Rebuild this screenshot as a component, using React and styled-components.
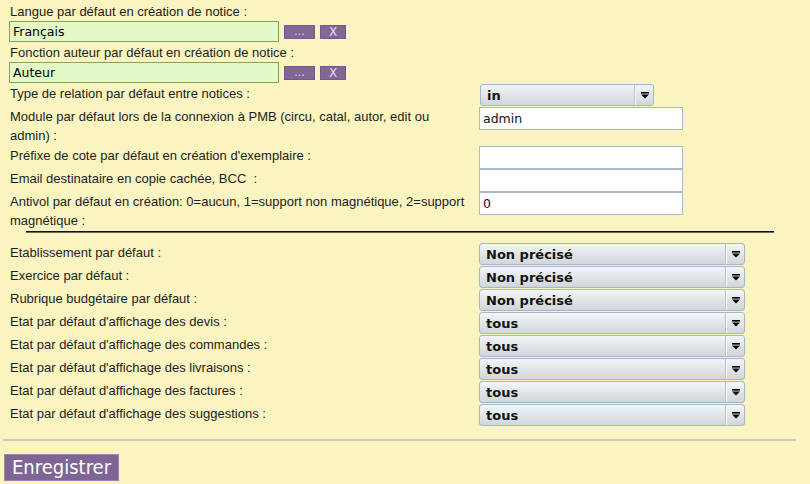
import React from "react";
import styled, { createGlobalStyle } from "styled-components";

const GlobalStyle = createGlobalStyle`
  html, body {
    margin: 0;
    padding: 0;
    background: #f9f4c0;
  }
  body {
    font-family: "Liberation Sans", Arial, sans-serif;
    font-size: 13px;
    color: #1e1e1e;
  }
`;

const Page = styled.div`
  display: flex;
  flex-direction: column;
  padding-top: 4px;
  min-height: 480px;
`;

const FieldBlock = styled.div`
  display: flex;
  flex-direction: column;
  padding-left: 9px;
  margin-bottom: ${(p) => p.$mb || 0}px;
`;

const FieldLabel = styled.div`
  line-height: 16px;
  padding-left: 1px;
`;

const ControlRow = styled.div`
  display: flex;
  align-items: center;
  gap: 5px;
  margin-top: 1px;
`;

const GreenInput = styled.input`
  box-sizing: border-box;
  width: 270px;
  height: 21px;
  margin: 0;
  padding: 0 3px;
  border: 1px solid #84a35a;
  background: #e5f9c8;
  font-family: "DejaVu Sans", sans-serif;
  font-size: 12.5px;
  color: #000;
  outline: none;
`;

const SmallButton = styled.button`
  box-sizing: border-box;
  width: ${(p) => p.$w}px;
  height: 14px;
  margin: 0;
  padding: 0;
  border: 1px solid #735a8a;
  background: #806796;
  color: #e4dcec;
  font-family: "DejaVu Sans", sans-serif;
  font-size: ${(p) => p.$fs || 11}px;
  line-height: 12px;
  display: flex;
  align-items: center;
  justify-content: center;
`;

const SettingsGrid = styled.div`
  display: grid;
  grid-template-columns: 470px 1fr;
  align-items: start;
  padding-left: 9px;
  margin-top: ${(p) => p.$mt || 0}px;
`;

const GridLabel = styled.div`
  line-height: 19px;
  padding: 0 10px 0 1px;
  min-height: ${(p) => (p.$tall ? 23 : 20)}px;
  padding-bottom: ${(p) => (p.$multi ? 1 : 0)}px;
`;

const Control = styled.div`
  display: flex;
  padding-left: ${(p) => p.$pl || 0}px;
`;

const TextInput = styled.input`
  box-sizing: border-box;
  width: 204px;
  height: 23px;
  margin: 0;
  padding: 0 3px;
  border: 1px solid #a9bac8;
  background: #fff;
  font-family: "DejaVu Sans", sans-serif;
  font-size: 12.5px;
  color: #111;
  outline: none;
`;

const SelectBox = styled.div`
  box-sizing: border-box;
  width: ${(p) => p.$w}px;
  height: 22px;
  margin-bottom: 1px;
  display: flex;
  align-items: stretch;
  border: 1px solid #a6b6c3;
  border-radius: 3px;
  background: linear-gradient(#f3f5f6, #d0d6da);
  font-family: "DejaVu Sans", sans-serif;
  font-weight: bold;
  font-size: 13px;
  color: #121212;
`;

const SelectValue = styled.span`
  flex: 1;
  padding-left: 6px;
  display: flex;
  align-items: center;
`;

const SelectArrow = styled.span`
  width: 17px;
  display: flex;
  align-items: center;
  justify-content: center;
  border-left: 1px solid #fbfcfc;
  box-shadow: -1px 0 0 #b9c2c9;
`;

const Divider = styled.div`
  grid-column: 1 / -1;
  margin-left: 17px;
  width: 748px;
  height: 0;
  border-top: 1px solid #111;
  border-bottom: 1px solid #6a6a6a;
`;

const Rule = styled.div`
  margin: 12px 14px 0 3px;
  height: 2px;
  background: #cacac4;
`;

const Footer = styled.div`
  padding: 13px 0 0 4px;
  display: flex;
`;

const SaveButton = styled.button`
  box-sizing: border-box;
  height: 27px;
  padding: 0 7px;
  margin: 0;
  border: 1px solid #9a86ad;
  background: #7f6496;
  color: #fff;
  font-family: "DejaVu Sans Condensed", "DejaVu Sans", sans-serif;
  font-stretch: condensed;
  font-size: 20px;
  line-height: 25px;
`;

const Arrow = () => (
  <svg width="8" height="7" viewBox="0 0 8 7" aria-hidden="true">
    <rect x="0" y="0" width="8" height="1.6" fill="#000" />
    <polygon points="0,2.6 8,2.6 4,6.6" fill="#000" />
  </svg>
);

const Select = ({ value, w }) => (
  <SelectBox $w={w}>
    <SelectValue>{value}</SelectValue>
    <SelectArrow>
      <Arrow />
    </SelectArrow>
  </SelectBox>
);

const acqRows = [
  ["Etablissement par défaut :", "Non précisé"],
  ["Exercice par défaut :", "Non précisé"],
  ["Rubrique budgétaire par défaut :", "Non précisé"],
  ["Etat par défaut d'affichage des devis :", "tous"],
  ["Etat par défaut d'affichage des commandes :", "tous"],
  ["Etat par défaut d'affichage des livraisons :", "tous"],
  ["Etat par défaut d'affichage des factures :", "tous"],
  ["Etat par défaut d'affichage des suggestions :", "tous"],
];

export default function App() {
  return (
    <>
      <GlobalStyle />
      <Page>
        <FieldBlock $mb={3}>
          <FieldLabel>Langue par défaut en création de notice :</FieldLabel>
          <ControlRow>
            <GreenInput defaultValue="Français" />
            <SmallButton $w={31}>...</SmallButton>
            <SmallButton $w={26} $fs={12}>X</SmallButton>
          </ControlRow>
        </FieldBlock>
        <FieldBlock $mb={1}>
          <FieldLabel>Fonction auteur par défaut en création de notice :</FieldLabel>
          <ControlRow>
            <GreenInput defaultValue="Auteur" />
            <SmallButton $w={31}>...</SmallButton>
            <SmallButton $w={26} $fs={12}>X</SmallButton>
          </ControlRow>
        </FieldBlock>

        <SettingsGrid>
          <GridLabel $tall>Type de relation par défaut entre notices :</GridLabel>
          <Control $pl={1}>
            <Select value="in" w={174} />
          </Control>

          <GridLabel $multi>
            Module par défaut lors de la connexion à PMB (circu, catal, autor, edit ou admin) :
          </GridLabel>
          <Control>
            <TextInput defaultValue="admin" />
          </Control>

          <GridLabel $tall>Préfixe de cote par défaut en création d'exemplaire :</GridLabel>
          <Control>
            <TextInput defaultValue="" />
          </Control>

          <GridLabel $tall>Email destinataire en copie cachée, BCC&nbsp; :</GridLabel>
          <Control>
            <TextInput defaultValue="" />
          </Control>

          <GridLabel $multi>
            Antivol par défaut en création: 0=aucun, 1=support non magnétique, 2=support magnétique :
          </GridLabel>
          <Control>
            <TextInput defaultValue="0" />
          </Control>

          <Divider />
        </SettingsGrid>

        <SettingsGrid $mt={10}>
          {acqRows.map(([label, value]) => (
            <React.Fragment key={label}>
              <GridLabel $tall>{label}</GridLabel>
              <Control>
                <Select value={value} w={266} />
              </Control>
            </React.Fragment>
          ))}
        </SettingsGrid>

        <Rule />
        <Footer>
          <SaveButton>Enregistrer</SaveButton>
        </Footer>
      </Page>
    </>
  );
}
